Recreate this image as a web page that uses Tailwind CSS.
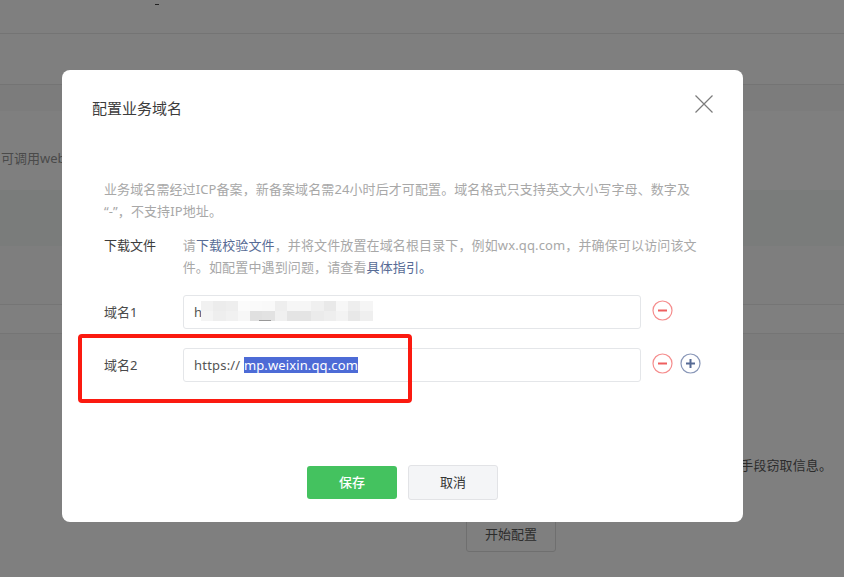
<!DOCTYPE html>
<html lang="zh-CN">
<head>
  <meta charset="UTF-8" />
  <title>配置业务域名</title>
  <script src="https://cdn.jsdelivr.net/npm/@tailwindcss/browser@4"></script>
</head>
<body class="bg-[#7f7f7f] font-['Noto_Sans','Noto_Sans_CJK_SC',sans-serif] overflow-hidden">

  <!-- dimmed page behind the dialog -->
  <div class="relative w-[844px] h-[577px] overflow-hidden text-[13px] text-[#333]">
    <div class="h-[34px] border-b border-[#747474] relative">
      <div class="absolute left-[155px] top-[4px] w-[4px] h-[1px] bg-[#222]"></div>
    </div>
    <div class="h-[51px] border-b border-[#747474]"></div>
    <div class="h-[26px] bg-[#7c7c7c]"></div>
    <div class="h-[79px] flex items-center pt-[16px] pl-[1px] text-[#4a4a4a]">
      <span>可调用web</span>
    </div>
    <div class="h-[56px] bg-[#7a7c7b]"></div>
    <div class="h-[58px] bg-[#7e7e7e]"></div>
    <div class="h-[30px] border-y border-[#757575]"></div>
    <div class="h-[26px] bg-[#7c7c7c]"></div>
    <div class="h-[115px] flex items-end justify-end pr-[12px] text-[#2c2c2c]">
      <span class="tracking-[0.1px]">手段窃取信息。</span>
    </div>
    <div class="flex pl-[466px] pt-[43px]">
      <div class="w-[90px] h-[34px] flex items-center justify-center border border-[#6f6f6f] rounded-[3px] text-[#2c2c2c]">开始配置</div>
    </div>

    <!-- dialog -->
    <div class="absolute left-[62px] top-[70px] w-[681px] h-[452px] bg-white rounded-[8px] flex flex-col">
      <div class="flex justify-between pl-[30px] pr-[30px] pt-[28px] h-[108px]">
        <h2 class="text-[15px] leading-[20px] text-[#3c3c3c]">配置业务域名</h2>
        <svg class="-mt-[3px]" width="18" height="18" viewBox="0 0 18 18" fill="none" stroke="#7c7c7c" stroke-width="1.2">
          <path d="M0.5 0.5L17.5 17.5M17.5 0.5L0.5 17.5" />
        </svg>
      </div>

      <div class="px-[42px] text-[13px] leading-[22px]">
        <p class="w-[600px] text-[#a8a8a8] tracking-[0.1px]">业务域名需经过ICP备案，新备案域名需24小时后才可配置。域名格式只支持英文大小写字母、数字及“-”，不支持IP地址。</p>

        <div class="flex mt-[12px]">
          <div class="w-[79px] text-[#3c3c3c]">下载文件</div>
          <p class="w-[520px] text-[#a8a8a8] tracking-[0.13px]">请<a class="text-[#576b95]">下载校验文件</a>，并将文件放置在域名根目录下，例如wx.qq.com，并确保可以访问该文件。如配置中遇到问题，请查看<a class="text-[#576b95]">具体指引。</a></p>
        </div>

        <div class="flex items-center mt-[17px] h-[34px]">
          <div class="w-[79px] text-[#4a4a4a]">域名1</div>
          <div class="relative w-[458px] h-[34px] flex items-center pl-[10px] border border-[#e4e6e9] rounded-[3px] text-[#555]">
            <span class="w-[6px]">h</span>
            <div class="grid grid-cols-[repeat(14,12.25px)] grid-rows-[10px_10px] -mt-[2px] ml-[1px]">
              <div class="bg-[#f1f1f1]"></div><div class="bg-[#ececec]"></div><div class="bg-[#eeeeee]"></div><div class="bg-[#fbfbfb]"></div><div class="bg-[#fafafa]"></div><div class="bg-[#f9f9f9]"></div><div class="bg-[#eeeeee]"></div><div class="bg-[#f6f6f6]"></div><div class="bg-[#f6f6f6]"></div><div class="bg-[#f0f0f0]"></div><div class="bg-[#e9e9e9]"></div><div class="bg-[#f7f7f7]"></div><div class="bg-[#eeeeee]"></div><div class="bg-[#f5f5f5]"></div>
              <div class="bg-[#f4f4f4]"></div><div class="bg-[#eeeeee]"></div><div class="bg-[#f1f1f1]"></div><div class="bg-[#f7f7f7]"></div><div class="bg-[#e0e0e0]"></div><div class="bg-[#e2e2e2]"></div><div class="bg-[#f0f0f0]"></div><div class="bg-[#e4e4e4]"></div><div class="bg-[#e4e4e4]"></div><div class="bg-[#ebebeb]"></div><div class="bg-[#eeeeee]"></div><div class="bg-[#f3f3f3]"></div><div class="bg-[#e8e8e8]"></div><div class="bg-[#efefef]"></div>
            </div>
            <div class="absolute left-[75px] top-[24px] w-[12px] h-[1px] bg-[#999]"></div>
          </div>
          <svg class="ml-[11px] mb-[4px]" width="21" height="21" viewBox="0 0 21 21" fill="none">
            <circle cx="10.5" cy="10.5" r="9.5" stroke="#f58d8d" stroke-width="1.2" />
            <path d="M6 10.5H15" stroke="#ee5f5f" stroke-width="2" />
          </svg>
        </div>

        <div class="flex items-center mt-[19px] h-[34px]">
          <div class="w-[79px] text-[#4a4a4a]">域名2</div>
          <div class="w-[458px] h-[34px] flex items-center pl-[10px] border border-[#e4e6e9] rounded-[3px] text-[#555] whitespace-pre">
            <span class="tracking-[0.2px]">https:// </span><span class="bg-[#4d6bd6] text-white leading-[16px] tracking-[0.12px]">mp.weixin.qq.com</span>
          </div>
          <svg class="ml-[11px] mb-[4px]" width="21" height="21" viewBox="0 0 21 21" fill="none">
            <circle cx="10.5" cy="10.5" r="9.5" stroke="#f58d8d" stroke-width="1.2" />
            <path d="M6 10.5H15" stroke="#ee5f5f" stroke-width="2" />
          </svg>
          <svg class="ml-[7px] mb-[4px]" width="21" height="21" viewBox="0 0 21 21" fill="none">
            <circle cx="10.5" cy="10.5" r="9.5" stroke="#8997b8" stroke-width="1.2" />
            <path d="M6 10.5H15M10.5 6V15" stroke="#576b95" stroke-width="2" />
          </svg>
        </div>
      </div>

      <div class="flex justify-center items-center gap-[11px] mt-auto mb-[22px]">
        <button class="w-[90px] h-[33px] bg-[#44c25f] rounded-[3px] text-white text-[13px] font-medium">保存</button>
        <button class="w-[90px] h-[35px] bg-[#f4f5f7] border border-[#e2e3e6] rounded-[3px] text-[#353535] text-[13px]">取消</button>
      </div>
    </div>

    <!-- red annotation drawn over the screenshot -->
    <div class="absolute left-[78px] top-[334px] w-[334px] h-[69px] border-[4px] border-[#fb1a10] rounded-[4px]"></div>
  </div>

</body>
</html>
